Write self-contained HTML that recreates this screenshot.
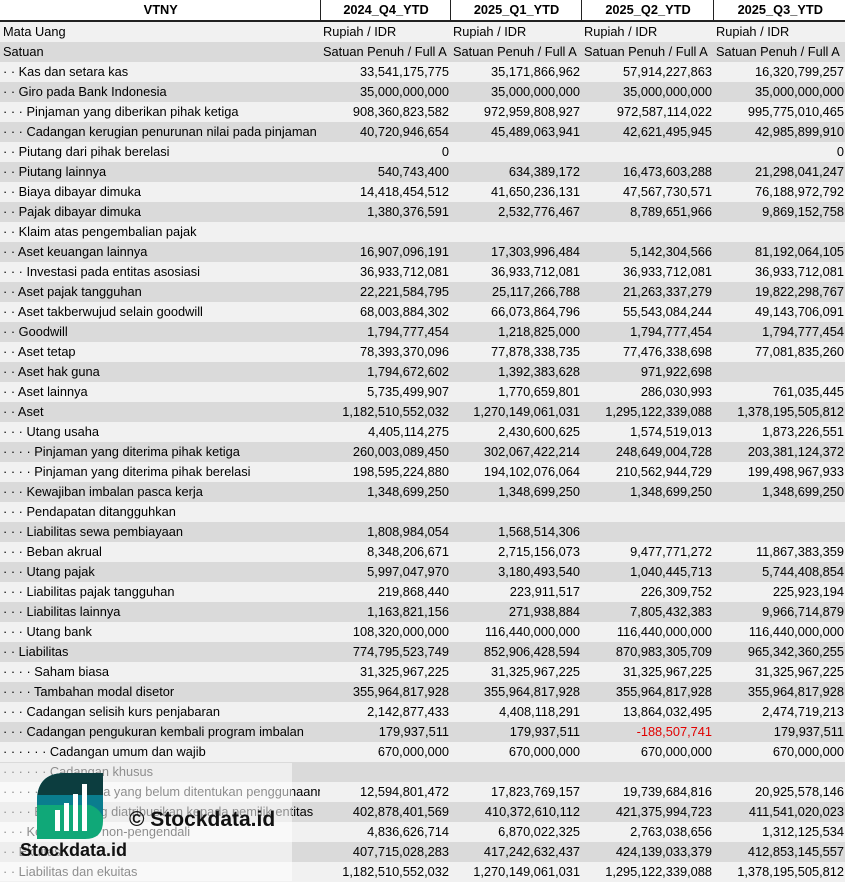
<!DOCTYPE html>
<html><head><meta charset="utf-8"><style>
*{margin:0;padding:0;box-sizing:border-box}
body{width:845px;height:881px;overflow:hidden;background:#fff;font-family:"Liberation Sans",sans-serif;font-size:12.8px;color:#000;position:relative}
table{border-collapse:collapse;table-layout:fixed;width:845px}
td{height:20px;line-height:20px;white-space:nowrap;overflow:hidden;padding:0 1px 0 3px;text-align:right}
td:first-child{text-align:left;padding-left:3px;text-overflow:clip}
tr.h td{font-weight:bold;text-align:center;background:#fff;border-left:1px solid #222;border-bottom:2px solid #222;height:21px;line-height:20px}
tr.h td:first-child{text-align:center;border-left:none}
tr.l td{background:#f1f1f1}
tr.g td{background:#dadada}
td.t{text-align:left}
.r{color:#e00000}
#wm{position:absolute;left:0;top:763px;width:292px;height:118px;background:rgba(255,255,255,0.55)}
</style></head><body>
<table>
<colgroup><col style="width:320px"><col style="width:130px"><col style="width:131px"><col style="width:132px"><col style="width:132px"></colgroup>
<tr class="h"><td>VTNY</td><td>2024_Q4_YTD</td><td>2025_Q1_YTD</td><td>2025_Q2_YTD</td><td>2025_Q3_YTD</td></tr>
<tr class="l"><td>Mata Uang</td><td class="t">Rupiah / IDR</td><td class="t">Rupiah / IDR</td><td class="t">Rupiah / IDR</td><td class="t">Rupiah / IDR</td></tr>
<tr class="g"><td>Satuan</td><td class="t">Satuan Penuh / Full A</td><td class="t">Satuan Penuh / Full A</td><td class="t">Satuan Penuh / Full A</td><td class="t">Satuan Penuh / Full A</td></tr>
<tr class="l"><td>· · Kas dan setara kas</td><td>33,541,175,775</td><td>35,171,866,962</td><td>57,914,227,863</td><td>16,320,799,257</td></tr>
<tr class="g"><td>· · Giro pada Bank Indonesia</td><td>35,000,000,000</td><td>35,000,000,000</td><td>35,000,000,000</td><td>35,000,000,000</td></tr>
<tr class="l"><td>· · · Pinjaman yang diberikan pihak ketiga</td><td>908,360,823,582</td><td>972,959,808,927</td><td>972,587,114,022</td><td>995,775,010,465</td></tr>
<tr class="g"><td>· · · Cadangan kerugian penurunan nilai pada pinjaman</td><td>40,720,946,654</td><td>45,489,063,941</td><td>42,621,495,945</td><td>42,985,899,910</td></tr>
<tr class="l"><td>· · Piutang dari pihak berelasi</td><td>0</td><td></td><td></td><td>0</td></tr>
<tr class="g"><td>· · Piutang lainnya</td><td>540,743,400</td><td>634,389,172</td><td>16,473,603,288</td><td>21,298,041,247</td></tr>
<tr class="l"><td>· · Biaya dibayar dimuka</td><td>14,418,454,512</td><td>41,650,236,131</td><td>47,567,730,571</td><td>76,188,972,792</td></tr>
<tr class="g"><td>· · Pajak dibayar dimuka</td><td>1,380,376,591</td><td>2,532,776,467</td><td>8,789,651,966</td><td>9,869,152,758</td></tr>
<tr class="l"><td>· · Klaim atas pengembalian pajak</td><td></td><td></td><td></td><td></td></tr>
<tr class="g"><td>· · Aset keuangan lainnya</td><td>16,907,096,191</td><td>17,303,996,484</td><td>5,142,304,566</td><td>81,192,064,105</td></tr>
<tr class="l"><td>· · · Investasi pada entitas asosiasi</td><td>36,933,712,081</td><td>36,933,712,081</td><td>36,933,712,081</td><td>36,933,712,081</td></tr>
<tr class="g"><td>· · Aset pajak tangguhan</td><td>22,221,584,795</td><td>25,117,266,788</td><td>21,263,337,279</td><td>19,822,298,767</td></tr>
<tr class="l"><td>· · Aset takberwujud selain goodwill</td><td>68,003,884,302</td><td>66,073,864,796</td><td>55,543,084,244</td><td>49,143,706,091</td></tr>
<tr class="g"><td>· · Goodwill</td><td>1,794,777,454</td><td>1,218,825,000</td><td>1,794,777,454</td><td>1,794,777,454</td></tr>
<tr class="l"><td>· · Aset tetap</td><td>78,393,370,096</td><td>77,878,338,735</td><td>77,476,338,698</td><td>77,081,835,260</td></tr>
<tr class="g"><td>· · Aset hak guna</td><td>1,794,672,602</td><td>1,392,383,628</td><td>971,922,698</td><td></td></tr>
<tr class="l"><td>· · Aset lainnya</td><td>5,735,499,907</td><td>1,770,659,801</td><td>286,030,993</td><td>761,035,445</td></tr>
<tr class="g"><td>· · Aset</td><td>1,182,510,552,032</td><td>1,270,149,061,031</td><td>1,295,122,339,088</td><td>1,378,195,505,812</td></tr>
<tr class="l"><td>· · · Utang usaha</td><td>4,405,114,275</td><td>2,430,600,625</td><td>1,574,519,013</td><td>1,873,226,551</td></tr>
<tr class="g"><td>· · · · Pinjaman yang diterima pihak ketiga</td><td>260,003,089,450</td><td>302,067,422,214</td><td>248,649,004,728</td><td>203,381,124,372</td></tr>
<tr class="l"><td>· · · · Pinjaman yang diterima pihak berelasi</td><td>198,595,224,880</td><td>194,102,076,064</td><td>210,562,944,729</td><td>199,498,967,933</td></tr>
<tr class="g"><td>· · · Kewajiban imbalan pasca kerja</td><td>1,348,699,250</td><td>1,348,699,250</td><td>1,348,699,250</td><td>1,348,699,250</td></tr>
<tr class="l"><td>· · · Pendapatan ditangguhkan</td><td></td><td></td><td></td><td></td></tr>
<tr class="g"><td>· · · Liabilitas sewa pembiayaan</td><td>1,808,984,054</td><td>1,568,514,306</td><td></td><td></td></tr>
<tr class="l"><td>· · · Beban akrual</td><td>8,348,206,671</td><td>2,715,156,073</td><td>9,477,771,272</td><td>11,867,383,359</td></tr>
<tr class="g"><td>· · · Utang pajak</td><td>5,997,047,970</td><td>3,180,493,540</td><td>1,040,445,713</td><td>5,744,408,854</td></tr>
<tr class="l"><td>· · · Liabilitas pajak tangguhan</td><td>219,868,440</td><td>223,911,517</td><td>226,309,752</td><td>225,923,194</td></tr>
<tr class="g"><td>· · · Liabilitas lainnya</td><td>1,163,821,156</td><td>271,938,884</td><td>7,805,432,383</td><td>9,966,714,879</td></tr>
<tr class="l"><td>· · · Utang bank</td><td>108,320,000,000</td><td>116,440,000,000</td><td>116,440,000,000</td><td>116,440,000,000</td></tr>
<tr class="g"><td>· · Liabilitas</td><td>774,795,523,749</td><td>852,906,428,594</td><td>870,983,305,709</td><td>965,342,360,255</td></tr>
<tr class="l"><td>· · · · Saham biasa</td><td>31,325,967,225</td><td>31,325,967,225</td><td>31,325,967,225</td><td>31,325,967,225</td></tr>
<tr class="g"><td>· · · · Tambahan modal disetor</td><td>355,964,817,928</td><td>355,964,817,928</td><td>355,964,817,928</td><td>355,964,817,928</td></tr>
<tr class="l"><td>· · · Cadangan selisih kurs penjabaran</td><td>2,142,877,433</td><td>4,408,118,291</td><td>13,864,032,495</td><td>2,474,719,213</td></tr>
<tr class="g"><td>· · · Cadangan pengukuran kembali program imbalan</td><td>179,937,511</td><td>179,937,511</td><td class="r">-188,507,741</td><td>179,937,511</td></tr>
<tr class="l"><td>· · · · · · Cadangan umum dan wajib</td><td>670,000,000</td><td>670,000,000</td><td>670,000,000</td><td>670,000,000</td></tr>
<tr class="g"><td>· · · · · · Cadangan khusus</td><td></td><td></td><td></td><td></td></tr>
<tr class="l"><td>· · · · · · Saldo laba yang belum ditentukan penggunaannya</td><td>12,594,801,472</td><td>17,823,769,157</td><td>19,739,684,816</td><td>20,925,578,146</td></tr>
<tr class="g"><td>· · · · Ekuitas yang diatribusikan kepada pemilik entitas</td><td>402,878,401,569</td><td>410,372,610,112</td><td>421,375,994,723</td><td>411,541,020,023</td></tr>
<tr class="l"><td>· · · Kepentingan non-pengendali</td><td>4,836,626,714</td><td>6,870,022,325</td><td>2,763,038,656</td><td>1,312,125,534</td></tr>
<tr class="g"><td>· · Ekuitas</td><td>407,715,028,283</td><td>417,242,632,437</td><td>424,139,033,379</td><td>412,853,145,557</td></tr>
<tr class="l"><td>· · Liabilitas dan ekuitas</td><td>1,182,510,552,032</td><td>1,270,149,061,031</td><td>1,295,122,339,088</td><td>1,378,195,505,812</td></tr>
</table>
<div id="wm"></div>
<svg style="position:absolute;left:37px;top:773px" width="66" height="66" viewBox="0 0 66 66">
<defs><clipPath id="c"><path d="M28 0H66V48Q66 66 48 66H0V28Q0 0 28 0Z"/></clipPath></defs>
<g clip-path="url(#c)">
<rect width="66" height="66" fill="#10a878"/>
<path d="M0 0H66V44Q60 30 40 30H0Z" fill="#0a7d8e"/>
<path d="M0 0H66V22H0Z" fill="#0c3d3f"/>
<path d="M0 22H66V30Q60 32 40 32H0Z" fill="#0a7d8e"/>
</g>
<rect x="18" y="37" width="5" height="21" fill="#fff"/>
<rect x="27" y="30" width="5" height="28" fill="#fff"/>
<rect x="36" y="21" width="5" height="37" fill="#fff"/>
<rect x="45" y="11" width="5" height="47" fill="#fff"/>
</svg>
<div style="position:absolute;left:129px;top:808px;font-weight:bold;font-size:21px;color:#111;white-space:nowrap">© Stockdata.id</div>
<div style="position:absolute;left:20px;top:840px;font-weight:bold;font-size:18px;color:#111;white-space:nowrap">Stockdata.id</div>
</body></html>
